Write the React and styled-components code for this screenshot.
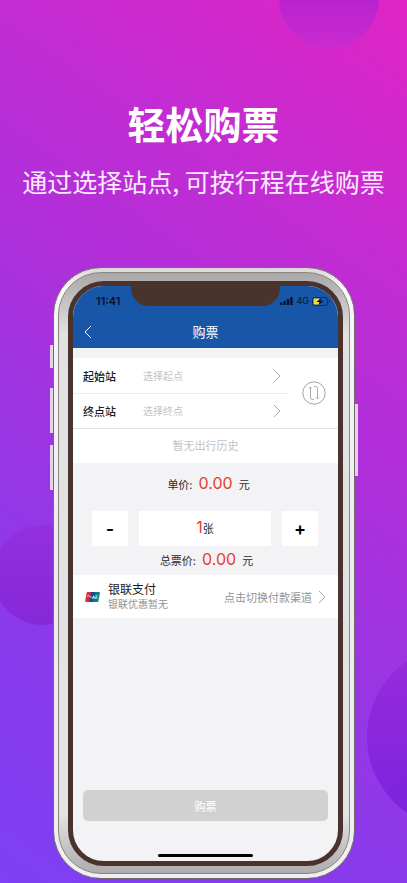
import { useState } from 'react';
import styled, { createGlobalStyle } from 'styled-components';

const GlobalStyle = createGlobalStyle`
  * {
    box-sizing: border-box;
  }

  body {
    margin: 0;
    font-family: Inter, "Noto Sans CJK SC", sans-serif;
  }

  button, input {
    font-family: inherit;
    border: 0;
    padding: 0;
    margin: 0;
    background: none;
  }
`

const Page = styled.main`
  position: relative;
  min-height: 100vh;
  display: flex;
  flex-direction: column;
  overflow: hidden;
  padding: 95px 0 4px;
  background: linear-gradient(35deg, #7d40f4 0%, #8b39ea 25%, #9537e6 35%, #b02fd9 59%, #c32cd3 76%, #e024c4 100%);
`

const Bubble = styled.div`
  position: absolute;
  top: ${props => props.$top};
  left: ${props => props.$left};
  width: ${props => props.$size};
  height: ${props => props.$size};
  border-radius: 50%;
  background: linear-gradient(${props => props.$from}, ${props => props.$to});
`

const Title = styled.h1`
  position: relative;
  margin: 0;
  color: #fff;
  font-size: 38px;
  line-height: 56px;
  font-weight: 700;
  font-family: "Noto Sans CJK SC", sans-serif;
  text-align: center;
`

const Subtitle = styled.p`
  position: relative;
  margin: 12px 0 0;
  color: #fbeaff;
  font-size: 25px;
  line-height: 36px;
  font-family: "Noto Sans CJK SC", sans-serif;
  text-align: center;
  white-space: nowrap;
`

const Phone = styled.div`
  position: relative;
  flex: 1;
  display: flex;
  margin: 68px 52px 0 53px;
  padding: 4px;
  border: 1px solid #75696f;
  border-radius: 48px;
  background: linear-gradient(#d9d6d6, #f8f7f7 20px, #ececec 50%, #f0eff0);
`

const SideKey = styled.span`
  position: absolute;
  ${props => props.$side}: -4px;
  top: ${props => props.$top};
  width: 3px;
  height: ${props => props.$height};
  background: #e3d3ea;
`

const Frame = styled.div`
  flex: 1;
  min-width: 0;
  display: flex;
  padding: 8px 6px 7px 9px;
  border: 1px solid #8d8484;
  border-radius: 43px;
  background: linear-gradient(#a9a7a7, #e2e1e1 60px, #e4e4e4 90%, #aeacae);
`

const Screen = styled.div`
  position: relative;
  flex: 1;
  min-width: 0;
  display: flex;
  flex-direction: column;
  overflow: hidden;
  border: 5px solid #4a322d;
  border-radius: 36px;
  background: #f3f3f6;
`

const Notch = styled.div`
  position: absolute;
  top: -1px;
  left: 22%;
  right: 22%;
  height: 21px;
  border-radius: 0 0 18px 18px;
  background: #4a322d;
`

const StatusBar = styled.div`
  display: flex;
  justify-content: space-between;
  align-items: center;
  height: 30px;
  padding: 0 8px 0 23px;
  background: #1857a8;
  color: #07112d;
`

const Clock = styled.time`
  font-size: 11px;
  font-weight: 600;
`

const Signals = styled.div`
  display: flex;
  align-items: center;
  gap: 3px;
  font-size: 9px;
  line-height: 10px;
`

const NavBar = styled.header`
  display: grid;
  grid-template-columns: 30px 1fr 30px;
  align-items: center;
  height: 32px;
  background: #1857a8;
  color: #fff;
`

const BackButton = styled.button`
  display: flex;
  justify-content: center;
  color: inherit;
`

const NavTitle = styled.h2`
  margin: 0;
  font-size: 13px;
  line-height: 20px;
  font-weight: 400;
  text-align: center;
`

const Stations = styled.section`
  display: flex;
  margin-top: 10px;
  background: #fff;
  border-bottom: 1px solid #e4e4e6;
`

const StationList = styled.div`
  flex: 1;
  min-width: 0;
`

const StationRow = styled.div`
  display: flex;
  align-items: center;
  height: 35px;
  padding: 0 8px 0 10px;

  & + & {
    border-top: 1px solid #ededee;
  }
`

const StationLabel = styled.label`
  width: 60px;
  color: #1c1c1c;
  font-size: 11px;
  font-weight: 500;
`

const StationInput = styled.input`
  flex: 1;
  min-width: 0;
  color: #333;
  font-size: 10px;
  outline: none;

  &::placeholder {
    color: #c3c3c5;
  }
`

const SwapButton = styled.button`
  display: flex;
  align-items: center;
  justify-content: center;
  width: 49px;
`

const History = styled.p`
  margin: 0;
  background: #fff;
  color: #c3c3c3;
  font-size: 11px;
  line-height: 34px;
  text-align: center;
`

const Price = styled.p`
  display: flex;
  justify-content: center;
  align-items: baseline;
  gap: 6px;
  margin: 0;
  padding: ${props => props.$padding};
  color: #2a2a2a;
  font-size: 11px;
  line-height: 24px;
`

const Amount = styled.span`
  color: #e2402b;
  font-size: 16px;
`

const Counter = styled.div`
  display: flex;
  gap: 11px;
  height: 35px;
  margin: 0 20px 0 19px;
`

const StepButton = styled.button`
  width: 36px;
  background: #fff;
  color: #000;
  font-size: 18px;
  font-weight: 600;
`

const Count = styled.output`
  flex: 1;
  display: flex;
  justify-content: center;
  align-items: baseline;
  background: #fff;
  color: #2a2a2a;
  font-size: 11px;
  line-height: 32px;
`

const Payment = styled.button`
  display: flex;
  align-items: center;
  height: 43px;
  padding: 0 12px;
  background: #fff;
  text-align: left;
`

const PaymentText = styled.span`
  flex: 1;
  margin-left: 8px;
`

const PaymentName = styled.span`
  display: block;
  color: #1c1c1c;
  font-size: 12px;
  line-height: 14px;
`

const PaymentNote = styled.span`
  display: block;
  color: #929292;
  font-size: 10px;
  line-height: 14px;
`

const PaymentHint = styled.span`
  margin-right: 6px;
  color: #929292;
  font-size: 11px;
`

const BuyButton = styled.button`
  height: 31px;
  margin: auto 10px 33px;
  border-radius: 5px;
  background: #d1d1d2;
  color: #fff;
  font-size: 11px;
`

const HomeIndicator = styled.div`
  width: 36%;
  height: 3px;
  margin: 0 auto 4px;
  border-radius: 2px;
  background: #000;
`

function Chevron({ left, color = '#a9a9ab' }) {
  return (
    <svg width="8" height="14" viewBox="0 0 8 14" fill="none" stroke={color} aria-hidden="true">
      <path d={left ? 'M7 1 1 7l6 6' : 'M1 1l6 6-6 6'} />
    </svg>
  )
}

function SignalIcon() {
  return (
    <svg width="13" height="8" viewBox="0 0 13 8" fill="currentColor" aria-hidden="true">
      <rect x="0" y="5.5" width="2.4" height="2.5" rx=".6" />
      <rect x="3.4" y="4" width="2.4" height="4" rx=".6" />
      <rect x="6.8" y="2" width="2.4" height="6" rx=".6" />
      <rect x="10.2" y="0" width="2.4" height="8" rx=".6" />
    </svg>
  )
}

function BatteryIcon() {
  return (
    <svg width="18" height="9" viewBox="0 0 18 9" aria-hidden="true">
      <rect x=".5" y=".5" width="15" height="8" rx="2" fill="none" stroke="#0d2f66" />
      <path d="M16.8 3v3q1-.4 1-1.5t-1-1.5" fill="#0d2f66" />
      <rect x="1.6" y="1.6" width="6" height="5.8" rx="1" fill="#f6d83c" />
      <path d="M9.2 1 4.4 5h3L6.6 8l5-4.2H8.4z" fill="#07112d" />
    </svg>
  )
}

function SwapIcon() {
  return (
    <svg width="24" height="24" viewBox="0 0 24 24" fill="none" stroke="#a3a3a3" aria-hidden="true">
      <circle cx="12" cy="12" r="11.2" />
      <path d="M8.500 6v10.500q0 2 2 2h1.500M7 7.500 8.500 6 10 7.500M12 5.500h1.500q2 0 2 2V18M14 16.500l1.500 1.500 1.500-1.500" strokeWidth=".9" />
    </svg>
  )
}

function UnionPayIcon() {
  return (
    <svg width="15" height="10" viewBox="0 0 15 10" aria-hidden="true">
      <path d="M2.4 0H7L5 10H.9Q0 10 .2 9L1.6 .9Q1.8 0 2.4 0z" fill="#d9303e" />
      <path d="M6 0h5L9 10H4z" fill="#1d4f87" />
      <path d="M10.2 0h4q.9 0 .7 .9L13.4 9.1q-.2 .9-1 .9H8.2z" fill="#0b7f86" />
      <path d="M2.2 4.2q1.2-1 2.2 0t2 .3" stroke="#f3dfe2" strokeWidth=".9" fill="none" />
      <path d="M6.6 5.8h5.8M8 4.4h1.2M10.6 4h2" stroke="#dcebed" strokeWidth="1.2" fill="none" />
    </svg>
  )
}

export default function App() {
  const [from, setFrom] = useState('')
  const [to, setTo] = useState('')
  const [count, setCount] = useState(1)

  function swap() {
    setFrom(to)
    setTo(from)
  }

  return (
    <>
      <GlobalStyle />
      <Page>
        <Bubble $top="-52px" $left="279px" $size="100px" $from="#a619ca" $to="#c92bd0" />
        <Bubble $top="525px" $left="-7px" $size="100px" $from="#9330df" $to="#8428d8" />
        <Bubble $top="645px" $left="367px" $size="184px" $from="#9a2bdc" $to="#7823dc" />

        <Title>轻松购票</Title>
        <Subtitle>通过选择站点, 可按行程在线购票</Subtitle>

        <Phone>
          <SideKey $side="left" $top="77px" $height="23px" />
          <SideKey $side="left" $top="120px" $height="45px" />
          <SideKey $side="left" $top="177px" $height="45px" />
          <SideKey $side="right" $top="136px" $height="72px" />
          <Frame>
            <Screen>
              <Notch />
              <StatusBar>
                <Clock>11:41</Clock>
                <Signals>
                  <SignalIcon />
                  <span>4G</span>
                  <BatteryIcon />
                </Signals>
              </StatusBar>
              <NavBar>
                <BackButton aria-label="返回">
                  <Chevron left color="#fff" />
                </BackButton>
                <NavTitle>购票</NavTitle>
              </NavBar>

              <Stations>
                <StationList>
                  <StationRow>
                    <StationLabel htmlFor="from">起始站</StationLabel>
                    <StationInput id="from" placeholder="选择起点" value={from} onChange={e => setFrom(e.target.value)} />
                    <Chevron />
                  </StationRow>
                  <StationRow>
                    <StationLabel htmlFor="to">终点站</StationLabel>
                    <StationInput id="to" placeholder="选择终点" value={to} onChange={e => setTo(e.target.value)} />
                    <Chevron />
                  </StationRow>
                </StationList>
                <SwapButton aria-label="交换" onClick={swap}>
                  <SwapIcon />
                </SwapButton>
              </Stations>
              <History>暂无出行历史</History>

              <Price $padding="8px 0 14px 6px">
                单价: <Amount>0.00</Amount> 元
              </Price>
              <Counter>
                <StepButton onClick={() => setCount(Math.max(1, count - 1))}>-</StepButton>
                <Count><Amount>{count}</Amount>张</Count>
                <StepButton onClick={() => setCount(count + 1)}>+</StepButton>
              </Counter>
              <Price $padding="1px 0 2px 2px">
                总票价: <Amount>0.00</Amount> 元
              </Price>

              <Payment>
                <UnionPayIcon />
                <PaymentText>
                  <PaymentName>银联支付</PaymentName>
                  <PaymentNote>银联优惠暂无</PaymentNote>
                </PaymentText>
                <PaymentHint>点击切换付款渠道</PaymentHint>
                <Chevron />
              </Payment>

              <BuyButton>购票</BuyButton>
              <HomeIndicator />
            </Screen>
          </Frame>
        </Phone>
      </Page>
    </>
  );
}
